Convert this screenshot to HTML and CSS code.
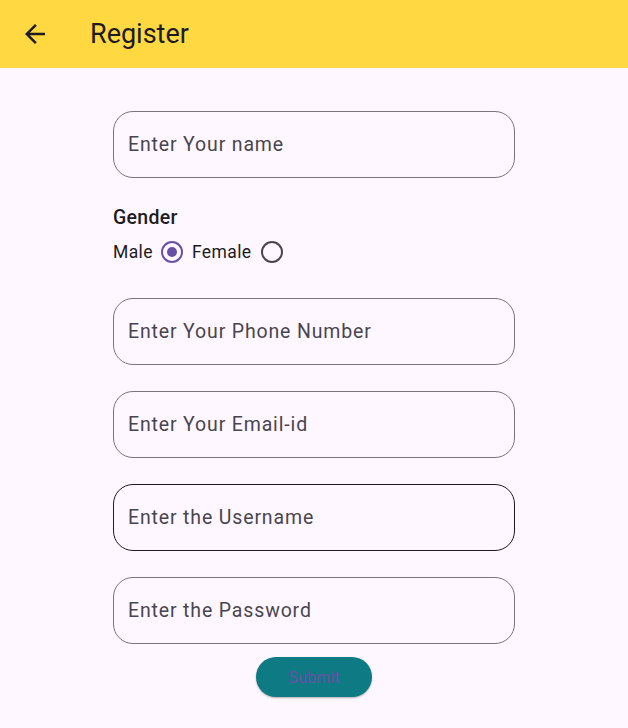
FILE: index.html
```html
<!DOCTYPE html>
<html>
<head>
<meta charset="utf-8">
<link rel="stylesheet" href="styles.css">
</head>
<body>
<header class="appbar">
  <svg class="back" width="30" height="30" viewBox="0 0 24 24"><path d="M20 11H7.83l5.59-5.59L12 4l-8 8 8 8 1.41-1.41L7.83 13H20v-2z" fill="#1d1b20"/></svg>
  <h1 class="title">Register</h1>
</header>
<main class="form">
  <div class="field"><span class="ph">Enter Your name</span></div>
  <div class="gender">
    <div class="glabel">Gender</div>
    <div class="radios">
      <span class="rlabel">Male</span>
      <span class="radio on"><span class="dot"></span></span>
      <span class="rlabel">Female</span>
      <span class="radio"></span>
    </div>
  </div>
  <div class="field"><span class="ph">Enter Your Phone Number</span></div>
  <div class="field"><span class="ph">Enter Your Email-id</span></div>
  <div class="field focus"><span class="ph">Enter the Username</span></div>
  <div class="field"><span class="ph">Enter the Password</span></div>
  <div class="actions"><button class="submit">Submit</button></div>
</main>
</body>
</html>
```
FILE: styles.css
```css
html, body { margin: 0; padding: 0; }
body {
  background: #fef7ff;
  font-family: Roboto, "Noto Sans", sans-serif;
  color: #1d1b20;
  width: 628px;
  height: 728px;
  overflow: hidden;
}
.appbar {
  height: 68px;
  background: #ffd842;
  display: flex;
  align-items: center;
  padding-left: 20px;
}
.back { width: 30px; height: 30px; }
.title {
  margin: 0 0 0 40px;
  font-size: 27px;
  font-weight: 400;
  color: #1d1b20;
}
.form {
  width: 402px;
  margin: 43px auto 0;
  display: flex;
  flex-direction: column;
}
.field {
  box-sizing: border-box;
  height: 67px;
  border: 1px solid #79747e;
  border-radius: 20px;
  display: flex;
  align-items: center;
  padding-left: 14px;
  padding-bottom: 1px;
  margin-bottom: 26px;
}
.field.focus { border-color: #1d1b20; }
.ph {
  font-size: 19.5px;
  letter-spacing: 0.85px;
  color: #49454f;
}
.gender {
  margin-bottom: 34px;
}
.glabel {
  font-size: 19.5px;
  font-weight: 500;
  color: #1d1b20;
  line-height: 28px;
  letter-spacing: 0.3px;
}
.radios {
  display: flex;
  align-items: center;
  margin-top: 8px;
  height: 24px;
}
.rlabel {
  font-size: 17.5px;
  color: #1d1b20;
  letter-spacing: 0.4px;
}
.radio {
  box-sizing: border-box;
  width: 22px;
  height: 22px;
  border: 2px solid #49454f;
  border-radius: 50%;
  margin: 0 9px;
  display: flex;
  align-items: center;
  justify-content: center;
}
.radio.on { border-color: #6750a4; margin-left: 8px; }
.dot { width: 10px; height: 10px; border-radius: 50%; background: #6750a4; }
.actions {
  display: flex;
  justify-content: center;
  margin-top: -13px;
}
.submit {
  width: 116px;
  height: 40px;
  border: none;
  border-radius: 20px;
  background: #0e7a84;
  color: #6750a4;
  font-family: Roboto, sans-serif;
  font-size: 16px;
  letter-spacing: 0.1px;
  padding-top: 2px;
  box-shadow: 0 1px 2px rgba(0,0,0,0.3);
}
```
